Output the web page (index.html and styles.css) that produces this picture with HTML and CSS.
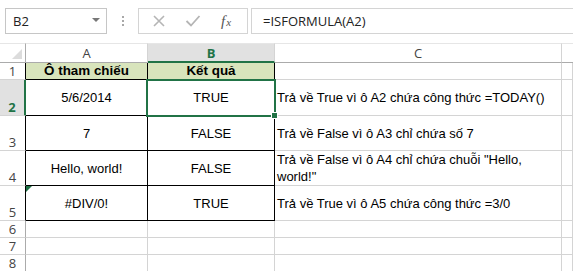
FILE: index.html
```html
<!DOCTYPE html>
<html lang="vi">
<head>
  <meta charset="UTF-8">
  <title>ISFORMULA</title>
  <link rel="stylesheet" href="styles.css">
</head>
<body>

<div class="toolbar">
  <div class="namebox">
    <span>B2</span>
    <span class="caret"></span>
  </div>
  <div class="dots"><i></i><i></i><i></i></div>
  <div class="fxbox">
    <svg class="ico" width="14" height="14" viewBox="0 0 14 14"><path d="M2 2 L12 12 M12 2 L2 12" stroke="#b5b5b5" stroke-width="1.6" fill="none"/></svg>
    <svg class="ico" width="16" height="14" viewBox="0 0 16 14"><path d="M1.5 7 L6 11.5 L14.5 2" stroke="#b5b5b5" stroke-width="1.8" fill="none"/></svg>
    <span class="fx">f<small>x</small></span>
  </div>
  <div class="formula">=ISFORMULA(A2)</div>
</div>

<div class="sheet">
  <!-- header -->
  <div class="corner"><span class="tri"></span></div>
  <div class="colhead">A</div>
  <div class="colhead sel">B</div>
  <div class="colhead">C</div>
  <div class="colhead last"></div>

  <!-- row 1 -->
  <div class="rowhead tbl">1</div>
  <div class="cell tb title">Ô tham chiếu</div>
  <div class="cell tb title">Kết quả</div>
  <div class="cell"></div>
  <div class="cell"></div>

  <!-- row 2 -->
  <div class="rowhead tbl sel">2</div>
  <div class="cell tb">5/6/2014</div>
  <div class="cell tb active">TRUE</div>
  <div class="cell note">Trả về True vì ô A2 chứa công thức =TODAY()</div>
  <div class="cell"></div>

  <!-- row 3 -->
  <div class="rowhead tbl">3</div>
  <div class="cell tb">7</div>
  <div class="cell tb">FALSE</div>
  <div class="cell note">Trả về False vì ô A3 chỉ chứa số 7</div>
  <div class="cell"></div>

  <!-- row 4 -->
  <div class="rowhead tbl">4</div>
  <div class="cell tb">Hello, world!</div>
  <div class="cell tb">FALSE</div>
  <div class="cell note">Trả về False vì ô A4 chỉ chứa chuỗi "Hello, world!"</div>
  <div class="cell"></div>

  <!-- row 5 -->
  <div class="rowhead tbl">5</div>
  <div class="cell tb err">#DIV/0!</div>
  <div class="cell tb">TRUE</div>
  <div class="cell note">Trả về True vì ô A5 chứa công thức =3/0</div>
  <div class="cell"></div>

  <div class="rowhead">6</div>
  <div class="cell"></div>
  <div class="cell"></div>
  <div class="cell"></div>
  <div class="cell"></div>

  <div class="rowhead">7</div>
  <div class="cell"></div>
  <div class="cell"></div>
  <div class="cell"></div>
  <div class="cell"></div>

  <div class="rowhead">8</div>
  <div class="cell"></div>
  <div class="cell"></div>
  <div class="cell"></div>
  <div class="cell"></div>
</div>

</body>
</html>
```

FILE: styles.css
```css
* {
    box-sizing: border-box;
}

body {
    margin: 0;
    background: #fff;
    overflow: hidden;
    font-family: "Liberation Sans", Arial, sans-serif;
}

/* formula bar */
.toolbar {
    height: 43px;
    padding-top: 8px;
    display: flex;
    align-items: flex-start;
    font-family: "Open Sans", "Noto Sans", sans-serif;
    font-size: 13px;
    color: #222;
}

.namebox {
    margin-left: 5px;
    width: 102px;
    height: 26px;
    border: 1px solid #c6c6c6;
    display: flex;
    align-items: center;
    justify-content: space-between;
    padding: 0 6px 0 7px;
}

.caret {
    width: 0;
    height: 0;
    border-left: 4px solid transparent;
    border-right: 4px solid transparent;
    border-top: 4px solid #777;
    margin-top: -2px;
}

.dots {
    width: 31px;
    height: 26px;
    display: flex;
    flex-direction: column;
    align-items: center;
    justify-content: center;
    gap: 2px;
}

.dots i {
    width: 2px;
    height: 2px;
    background: #a8a8a8;
}

.fxbox {
    width: 110px;
    height: 26px;
    border: 1px solid #d4d4d4;
    display: flex;
    align-items: center;
    padding-left: 13px;
    gap: 19px;
}

.fx {
    font-family: "Liberation Serif", serif;
    font-style: italic;
    font-size: 15px;
    color: #555;
    margin-left: 1px;
}

.fx small {
    font-size: 11px;
    margin-left: 1px;
}

.formula {
    flex: 1;
    margin-left: 3px;
    height: 26px;
    border: 1px solid #d4d4d4;
    border-right: none;
    padding-left: 11px;
    line-height: 24px;
}

/* grid */
.sheet {
    display: grid;
    grid-template-columns: 26px 122px 127px 287px 1fr;
    grid-template-rows: 20px 17px 36px 35px 35px 35px 17px 17px 17px;
}

.sheet > div {
    border-right: 1px solid #d4d4d4;
    border-bottom: 1px solid #d4d4d4;
}

.corner {
    position: relative;
    border-right-color: #ababab !important;
    border-bottom-color: #ababab !important;
    border-top: 1px solid #e6e6e6;
}

.tri {
    position: absolute;
    right: 3px;
    bottom: 3px;
    width: 0;
    height: 0;
    border-left: 10px solid transparent;
    border-bottom: 10px solid #dcdcdc;
}

.colhead {
    font-family: "Open Sans", "Noto Sans", sans-serif;
    font-size: 13px;
    color: #444;
    text-align: center;
    line-height: 18px;
    border-top: 1px solid #e6e6e6;
    border-bottom-color: #ababab !important;
}

.colhead.sel {
    background: #e1e1e1;
    color: #217346;
    font-weight: bold;
    border-bottom: 2px solid #217346 !important;
}

.colhead.last {
    border-right: none !important;
}

.rowhead {
    font-family: "Open Sans", "Noto Sans", sans-serif;
    font-size: 13px;
    color: #444;
    text-align: center;
    display: flex;
    align-items: flex-end;
    justify-content: center;
    line-height: 16px;
    border-right-color: #ababab !important;
}

.rowhead.tbl {
    border-right-color: #000 !important;
}

.rowhead.sel {
    background: #e1e1e1;
    color: #217346;
    font-weight: bold;
    border-right: 2px solid #217346 !important;
}

.cell {
    font-size: 13px;
    color: #000;
    display: flex;
    align-items: center;
    justify-content: center;
    text-align: center;
    line-height: 17px;
}

.cell.tb {
    border-right-color: #000 !important;
    border-bottom-color: #000 !important;
}

.title {
    background: #d8e4bc;
    font-weight: bold;
    font-size: 13.4px;
    line-height: 16px;
}

.note {
    justify-content: flex-start;
    text-align: left;
    padding-left: 2px;
}

.active {
    position: relative;
}

.active::after {
    content: "";
    position: absolute;
    left: -2px;
    top: -1px;
    right: -2px;
    bottom: -2px;
    border: 2px solid #217346;
}

.active::before {
    content: "";
    position: absolute;
    right: -4px;
    bottom: -4px;
    width: 5px;
    height: 5px;
    background: #217346;
    border: 1px solid #fff;
    z-index: 2;
}

.err {
    position: relative;
}

.err::before {
    content: "";
    position: absolute;
    left: 0;
    top: 0;
    border-top: 6px solid #1e7145;
    border-right: 6px solid transparent;
}
```
